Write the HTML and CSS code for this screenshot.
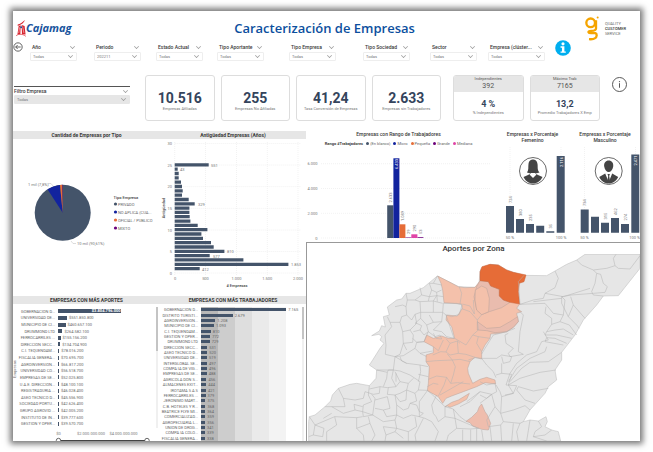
FILE: index.html
```html
<!DOCTYPE html>
<html lang="es">
<head>
<meta charset="utf-8">
<title>Caracterización de Empresas</title>
<link rel="stylesheet" href="styles.css">
</head>
<body>
<main class="dash">
  <header class="top">
    <div class="brand">
      <svg class="brand-mark" viewBox="0 0 30 52" aria-hidden="true">
        <path d="M5 14C12 12 20 7 27 0C25 8 17 14 5 18Z" fill="#d8232e"/>
        <path d="M8 18L14 16L13 44H4Z M17 15L26 18L29 44H18Z" fill="#d8232e"/>
        <path d="M11 22L8 40M20 20L24 40M1 49C10 42 20 42 30 49" fill="none" stroke="#fff" stroke-width="1.5"/>
        <path d="M0 48C10 41 20 43 30 50" fill="none" stroke="#d8232e" stroke-width="2"/>
        <circle cx="15.500" cy="22" r="3" fill="#17539c"/>
      </svg>
      <span class="brand-name">Cajamag</span>
    </div>
    <h1>Caracterización de Empresas</h1>
    <div class="partner">
      <svg class="partner-mark" viewBox="0 0 42 74" aria-hidden="true">
        <circle cx="17" cy="20" r="13" fill="none" stroke="#f5a400" stroke-width="7"/>
        <path d="M33 12V37C32 49 7 40 11 49C14 55 36 44 35 58C34 68 23 70 12 69" fill="none" stroke="#f5a400" stroke-width="7"/>
        <circle cx="38" cy="4" r="3" fill="#f5a400"/>
      </svg>
      <p>QUALITY<br><b>CUSTOMER</b><br>SERVICE</p>
    </div>
  </header>

  <section class="filters">
    <button class="icon-btn back" aria-label="Volver">
      <svg viewBox="0 0 30 30"><circle cx="15" cy="15" r="12.500" fill="none" stroke="#444" stroke-width="2.500"/><path d="M23 15H8M14 9L8 15L14 21" fill="none" stroke="#444" stroke-width="2.500"/></svg>
    </button>
    <div class="slicers">
      <div class="slicer"><label for="f1">Año</label><span class="pick"><select id="f1"><option>Todas</option></select></span></div>
      <div class="slicer"><label for="f2">Periodo</label><span class="pick"><select id="f2"><option>202211</option></select></span></div>
      <div class="slicer"><label for="f3">Estado Actual</label><span class="pick"><select id="f3"><option>Todas</option></select></span></div>
      <div class="slicer"><label for="f4">Tipo Aportante</label><span class="pick"><select id="f4"><option>Todas</option></select></span></div>
      <div class="slicer"><label for="f5">Tipo Empresa</label><span class="pick"><select id="f5"><option>Todas</option></select></span></div>
      <div class="slicer"><label for="f6">Tipo Sociedad</label><span class="pick"><select id="f6"><option>Todas</option></select></span></div>
      <div class="slicer"><label for="f7">Sector</label><span class="pick"><select id="f7"><option>Todas</option></select></span></div>
      <div class="slicer wide"><label for="f8">Empresa (clúster...</label><span class="pick"><select id="f8"><option>Todas</option></select></span></div>
    </div>
    <button class="icon-btn help" aria-label="Ayuda">
      <svg viewBox="0 0 46 46"><circle cx="23" cy="23" r="22.500" fill="#00aeef"/><circle cx="23" cy="11" r="4.500" fill="#fff"/><path d="M16 18H27V33H31V37H16V33H20V22H16Z" fill="#fff"/></svg>
    </button>
  </section>

  <section class="kpis">
    <div class="slicer company"><label for="f9">Filtro Empresa</label><span class="pick"><select id="f9"><option>Todas</option></select></span></div>
    <div class="cards four">
      <article class="card"><strong>10.516</strong><span>Empresas Afiliadas</span></article>
      <article class="card"><strong>255</strong><span>Empresas No Afiliadas</span></article>
      <article class="card"><strong>41,24</strong><span>Tasa Conversión de Empresas</span></article>
      <article class="card"><strong>2.633</strong><span>Empresas sin Trabajadores</span></article>
    </div>
    <div class="cards two">
      <article class="card split"><header><span>Independientes</span><em>392</em></header><strong>4 %</strong><span>% Independientes</span></article>
      <article class="card split"><header><span>Máximo Trab</span><em>7165</em></header><strong>13,2</strong><span>Promedio Trabajadores X Emp</span></article>
    </div>
    <button class="icon-btn info" aria-label="Información">
      <svg viewBox="0 0 46 46"><circle cx="23" cy="23" r="21.500" fill="none" stroke="#555" stroke-width="3"/><circle cx="23" cy="14" r="2" fill="#555"/><path d="M23 19V33" stroke="#555" stroke-width="3"/></svg>
    </button>
  </section>

  <div class="board">
    <div class="left">
      <section class="panel">
        <h2 class="bar-title">Cantidad de Empresas por Tipo</h2>
        <svg class="chart" viewBox="13 139 147 157">
          <circle cx="62.700" cy="212.800" r="28" fill="#44546a"/>
          <path d="M62.700 212.800L47.500 189.300A28 28 0 0 1 60 184.900Z" fill="#12239e"/>
          <path d="M62.700 212.800L60 184.900A28 28 0 0 1 62.200 184.800Z" fill="#e66c37"/>
          <path d="M62.700 212.800L62.200 184.800H62.700Z" fill="#6b007b"/>
          <path d="M48 183.500H51L53 186M71 241L73 243.500H76" fill="none" stroke="#bbb" stroke-width=".5"/>
          <g class="t4"><text x="28" y="185.500">1 mil (7,8%)</text><text x="77" y="245">10 mil (90,61%)</text></g>
          <text class="t4 strong" x="113.500" y="199">Tipo Empresa</text>
          <circle cx="115.500" cy="204" r="1.600" fill="#44546a"/><circle cx="115.500" cy="212" r="1.600" fill="#12239e"/><circle cx="115.500" cy="220" r="1.600" fill="#e66c37"/><circle cx="115.500" cy="228" r="1.600" fill="#6b007b"/>
          <g class="t4 mid"><text x="118" y="205.500">PRIVADO</text><text x="118" y="213.500">NO APLICA (CUA...</text><text x="118" y="221.500">OFICIAL / PUBLICO</text><text x="118" y="229.500">MIXTO</text></g>
        </svg>
      </section>

      <section class="panel">
        <h2 class="bar-title">Antigüedad Empresas (Años)</h2>
        <svg class="chart" viewBox="160 139 146 157">
          <path class="gridline" d="M174.700 143.500H301M174.700 165H301M174.700 186.700H301M174.700 208.300H301M174.700 230H301M174.700 251.500H301M174.700 273H301M174.700 142V275M205.500 142V275M236.500 142V275M267.300 142V275M298 142V275"/>
          <path fill="none" stroke="#44546a" stroke-width="3.300" d="M174.700 268.600h25M174.700 264.300h113.700M174.700 259.900h68.700M174.700 255.600h35M174.700 251.300h49.700M174.700 247h39M174.700 242.700h36.300M174.700 238.300h28.300M174.700 234h26.700M174.700 229.700h32.700M174.700 225.400h23M174.700 221.100h15.700M174.700 216.700h15M174.700 212.400h14.700M174.700 208.100h14.700M174.700 203.800h20M174.700 199.500h14M174.700 195.100h7.300M174.700 190.800h8M174.700 186.500h7.300M174.700 182.200h6.300M174.700 177.900h4M174.700 173.500h4M174.700 169.200h3M174.700 164.900h34"/>
          <g class="t4 end"><text x="172" y="145">30</text><text x="172" y="166.500">25</text><text x="172" y="188">20</text><text x="172" y="210">15</text><text x="172" y="231.500">10</text><text x="172" y="253">5</text><text x="172" y="274.500">0</text></g>
          <g class="t4 center"><text x="175" y="280">0</text><text x="205.500" y="280">500</text><text x="236.500" y="280">1.000</text><text x="267.300" y="280">1.500</text><text x="298" y="280">2.000</text></g>
          <g class="t4"><text x="211" y="166.500">551</text><text x="180" y="171">43</text><text x="198" y="205.500">329</text><text x="227" y="253">810</text><text x="213" y="257.500">577</text><text x="291" y="266">1.853</text><text x="202" y="270.500">412</text></g>
          <text class="t4 strong center" x="237" y="286.500">#  Empresas</text>
          <text class="t4 strong center" transform="translate(164.500 208) rotate(-90)">Antigüedad</text>
        </svg>
      </section>

      <section class="panel">
        <h2 class="bar-title">EMPRESAS CON MÁS APORTES</h2>
        <div class="scroller aportes">
          <svg class="side-label" viewBox="0 0 4 30"><text class="t4 center" transform="translate(3 15) rotate(-90)">Empresas</text></svg>
          <ol class="rows">
            <li><span>GOBERNACION D...</span><i class="inside" style="width:45%">$3.804.796.000</i></li>
            <li><span>UNIVERSIDAD DE...</span><i style="width:6.5%"></i><b>$551.850.800</b></li>
            <li><span>MUNICIPIO DE CI...</span><i style="width:5.4%"></i><b>$460.657.100</b></li>
            <li><span>DRUMMOND LTD</span><i style="width:3.2%"></i><b>$264.582.100</b></li>
            <li><span>FERROCARRILES ...</span><i style="width:1.8%"></i><b>$155.156.200</b></li>
            <li><span>DIRECCION SECC...</span><i style="width:1.6%"></i><b>$134.704.900</b></li>
            <li><span>C.I. TEQUENDAM...</span><i style="width:.9%"></i><b>$78.016.200</b></li>
            <li><span>FISCALIA GENERA...</span><i style="width:.8%"></i><b>$70.695.700</b></li>
            <li><span>AGROINVERSION...</span><i style="width:.8%"></i><b>$66.817.200</b></li>
            <li><span>UNIVERSIDAD CO...</span><i style="width:.7%"></i><b>$56.518.700</b></li>
            <li><span>EMPRESAS DE SE...</span><i style="width:.7%"></i><b>$52.025.800</b></li>
            <li><span>U.A.E. DIRECCION...</span><i style="width:.7%"></i><b>$48.100.100</b></li>
            <li><span>REGISTRADURIA ...</span><i style="width:.7%"></i><b>$46.028.400</b></li>
            <li><span>ASEO TECNICO D...</span><i style="width:.7%"></i><b>$45.556.900</b></li>
            <li><span>SOCIEDAD PORTU...</span><i style="width:.7%"></i><b>$42.626.400</b></li>
            <li><span>GRUPO AGROVID ...</span><i style="width:.7%"></i><b>$42.005.200</b></li>
            <li><span>INSTITUTO DE IN...</span><i style="width:.7%"></i><b>$39.777.600</b></li>
            <li><span>GESTION Y OPER...</span><i style="width:.7%"></i><b>$39.570.700</b></li>
          </ol>
          <div class="track"><div class="thumb"></div></div>
        </div>
        <svg class="chart" viewBox="13 428 147 13">
          <g class="t4 center"><text x="58.500" y="434.500">$0</text><text x="91" y="434.500">$2.000.000.000</text><text x="123.500" y="434.500">$4.000.000.000</text></g>
          <path d="M58.500 440.500H147" stroke="#444"/><g fill="#fff" stroke="#444" stroke-width=".800"><circle cx="58.500" cy="440.500" r="2.200"/><circle cx="147" cy="440.500" r="2.200"/></g>
        </svg>
      </section>

      <section class="panel">
        <h2 class="bar-title">EMPRESAS CON MÁS TRABAJADORES</h2>
        <div class="scroller workers">
          <ol class="rows">
            <li><span>GOBERNACION D...</span><i style="width:60%"></i><b>7.165</b></li>
            <li><span>DISTRITO TURISTI...</span><i style="width:22.4%"></i><b>2.679</b></li>
            <li><span>AGROINVERSION...</span><i style="width:10.1%"></i><b>1.208</b></li>
            <li><span>MUNICIPIO DE CI...</span><i style="width:9.2%"></i><b>1.093</b></li>
            <li><span>C.I. TEQUENDAM...</span><i style="width:6.8%"></i><b>810</b></li>
            <li><span>GESTION Y OPER...</span><i style="width:6.5%"></i><b>772</b></li>
            <li><span>DRUMMOND LTD</span><i style="width:6.1%"></i><b>729</b></li>
            <li><span>DIRECCION SECC...</span><i style="width:4.4%"></i><b>531</b></li>
            <li><span>ASEO TECNICO D...</span><i style="width:4.4%"></i><b>520</b></li>
            <li><span>UNIVERSIDAD DE...</span><i style="width:4.3%"></i><b>519</b></li>
            <li><span>INTERGLOBAL SE...</span><i style="width:4.2%"></i><b>497</b></li>
            <li><span>COMPA IA DE VIG...</span><i style="width:4.2%"></i><b>496</b></li>
            <li><span>EMPRESAS DE SE...</span><i style="width:4.1%"></i><b>488</b></li>
            <li><span>AGRICOLA DON S...</span><i style="width:3.8%"></i><b>456</b></li>
            <li><span>ALMACENES EXIT...</span><i style="width:3.7%"></i><b>444</b></li>
            <li><span>IROTAMA S A S</span><i style="width:3.5%"></i><b>421</b></li>
            <li><span>FERROCARRILES ...</span><i style="width:3.2%"></i><b>379</b></li>
            <li><span>JERONIMO MART...</span><i style="width:3.1%"></i><b>375</b></li>
            <li><span>C.B. HOTELES Y R...</span><i style="width:3.1%"></i><b>368</b></li>
            <li><span>BEATRICE FLYE MI...</span><i style="width:3%"></i><b>364</b></li>
            <li><span>COMERCIALIZAD...</span><i style="width:3%"></i><b>359</b></li>
            <li><span>AGROPECUARIA L...</span><i style="width:3%"></i><b>356</b></li>
            <li><span>UNION DE DROG...</span><i style="width:2.9%"></i><b>341</b></li>
            <li><span>COMPA IA COLO...</span><i style="width:2.8%"></i><b>339</b></li>
            <li><span>FISCALIA GENERA...</span><i style="width:2.8%"></i><b>338</b></li>
          </ol>
          <div class="track"><div class="thumb"></div></div>
        </div>
      </section>
    </div>

    <div class="right">
      <div class="trio">
        <section class="panel">
          <h2>Empresas con Rango de Trabajadores</h2>
          <ul class="legend">
            <li class="head">Rango #Trabajadores</li><li class="c1">(En blanco)</li><li class="c2">Micro</li><li class="c3">Pequeña</li><li class="c4">Grande</li><li class="c5">Mediana</li>
          </ul>
          <svg class="chart" viewBox="306 149 185 93">
            <path class="gridline" d="M321 163.700H491M321 188.500H491M321 213.300H491M321 238H491"/>
            <g class="t4 end"><text x="317.500" y="165">6.000</text><text x="317.500" y="190">4.000</text><text x="317.500" y="214.500">2.000</text><text x="317.500" y="239.500">0</text></g>
            <path fill="#44546a" d="M387.200 205.300h6.200v32.700h-6.200z"/><path fill="#12239e" d="M393.400 158.300h6v79.700h-6z"/><path fill="#e66c37" d="M399.400 224.300h6v13.700h-6z"/><path fill="#6b007b" d="M405.400 237.400h6v.6h-6zM417.400 237.200h6v.8h-6z"/><path fill="#e044a7" d="M411.300 234.300h6.100v3.700h-6.100z"/>
            <g class="t4"><text transform="translate(391.700 202.500) rotate(-90)">2.633</text><text class="light" transform="translate(398 169) rotate(-90)">6.433</text><text transform="translate(404 221) rotate(-90)">1.089</text><text transform="translate(409.700 234) rotate(-90)">29</text><text transform="translate(415.500 231.500) rotate(-90)">290</text><text transform="translate(422 234) rotate(-90)">53</text></g>
          </svg>
        </section>
        <section class="panel">
          <h2>Empresas x Porcentaje Femenino</h2>
          <svg class="chart" viewBox="495 145 75 97">
            <path class="gridline" d="M510 147V233M561 147V233"/>
            <path fill="#44546a" d="M506 206h8v26.700h-8zM516 219h8v13.700h-8zM526 224h8v8.700h-8zM536.200 225.700h8v7h-8zM546.300 231.300h8v1.400h-8zM556.700 156h8v76.700h-8z"/>
            <g transform="translate(533 171)"><circle r="13.500" fill="#fff" stroke="#444" stroke-width=".800"/><path fill="#444" d="M-6 1.500C-4-1-5-4-4.500-7C-4-10.500-2-11.500 0-11.500S4-10.500 4.500-7C5-4 4 -1 6.500 1.500L2.500 2.500L5 4L9.500 6C7 11 3 12.500 0 12.500S-7 11-9.500 6L-5 4L-2.500 2.500Z"/><path d="M-3.500 3.500L0 7L3.500 3.500L2 2H-2Z" fill="#fff"/></g>
            <g class="t4"><text transform="translate(511.500 203) rotate(-90)">724</text><text transform="translate(521.500 216) rotate(-90)">380</text><text transform="translate(531.500 221) rotate(-90)">235</text><text transform="translate(552 228.500) rotate(-90)">35</text><text class="light" transform="translate(562.500 167) rotate(-90)">2.116</text></g>
            <g class="t4 center"><text x="510" y="238.500">50 %</text><text x="561" y="238.500">100 %</text></g>
          </svg>
        </section>
        <section class="panel">
          <h2>Empresas x Porcentaje Masculino</h2>
          <svg class="chart" viewBox="570 145 70 97">
            <path class="gridline" d="M584.500 147V233M635.500 147V233"/>
            <path fill="#44546a" d="M580.700 209.500h8v23.200h-8zM591 216.700h8v16h-8zM601 222.700h8v10h-8zM611 218h8v14.700h-8zM621 224h8v8.700h-8zM631.300 154.500h8v78.200h-8z"/>
            <g transform="translate(608.700 171)"><circle r="13.500" fill="#fff" stroke="#444" stroke-width=".800"/><path fill="#444" d="M0-10.500C3-10.500 5-8 4.500-4.500C4 -1 2 1 0 1S-4-1-4.500-4.500C-5-8-3-10.500 0-10.500ZM-3.500 2.500L0 11L3.500 2.500L9.500 6C7 11 3 12.500 0 12.500S-7 11-9.500 6Z"/><path fill="#444" d="M-1.200 3H1.200L.5 5L1.300 10L0 12L-1.300 10L-.5 5Z"/></g>
            <g class="t4"><text transform="translate(586.200 206) rotate(-90)">734</text><text transform="translate(606.500 219.500) rotate(-90)">315</text><text transform="translate(616.500 215) rotate(-90)">462</text><text transform="translate(626.500 220.500) rotate(-90)">274</text><text class="light" transform="translate(637 165.500) rotate(-90)">2.471</text></g>
            <g class="t4 center"><text x="584.500" y="238.500">50 %</text><text x="634.500" y="238.500">100 %</text></g>
          </svg>
        </section>
      </div>

      <section class="map">
        <h2>Aportes por Zona</h2>
        <svg class="chart" viewBox="21 57 999 561">
          <path class="land" d="M26 618V560L28 545L45 540L75 515L92 498L97 480L115 460L150 448L170 445L208 452L228 430L230 405L208 390L218 375L240 340L252 325L240 315L245 305L237 298L215 302L238 288L245 272L256 276L250 245L268 240L262 216L290 195L305 192L318 175L330 175L370 158L412 123L450 142L475 155L525 157L537 145L540 110L545 98L570 88L595 90L620 105L640 112L672 121L740 122L765 108L800 88L830 75L855 58H1020V100L955 182L910 183L890 210L850 255L825 300L785 352V375L765 405L770 435L745 455L735 475L690 525L670 560L690 555L715 558L738 545L742 560L735 575L755 585L775 590L782 618Z"/>
          <g transform="translate(210 15)">
            <path fill="#f4c1ab" stroke="#b9a39b" d="M203 108L240 127L265 140L285 143L315 142L330 122L449 192L440 205L455 215L440 220L445 245L430 262L410 275L385 280L362 282L360 295L345 315L335 335V357L315 352L300 365L293 385L295 400L308 430L330 418L350 412L375 420L377 432L345 428L320 440L280 455L245 468L228 475L218 490L205 470L172 452L175 430L178 380L168 365V345L190 338V320L162 305L170 285L190 295L215 288L235 295L254 295L245 260L228 240L230 225L262 228L277 205L275 192L222 188L218 150L213 130Z"/>
            <path fill="#e9bcae" stroke="#b9a39b" d="M330 122L355 125L362 138L388 148V168L400 180L420 187L395 203L358 215L335 224L320 210L312 170L320 140ZM322 245L350 265L390 262L420 245L443 230L445 245L430 262L410 275L375 278L350 272L322 270Z"/>
            <path fill="#f4c1ab" stroke="#b9a39b" d="M316 150L335 138L350 145L358 175L356 215L335 224L320 210L315 180ZM225 500L245 487L265 480L298 460L290 478L265 492L240 502L232 498Z"/>
            <path fill="#e66c37" stroke="#c8653c" d="M330 95L336 80L360 73L385 75L410 90L430 97L468 105L462 125L448 130L445 155L449 192L420 187L400 180L388 168V148L362 138L355 125L330 122Z"/>
            <path fill="#efbdad" stroke="#b9a39b" d="M335 492L345 515L352 525L362 550L355 570L335 568L308 558L300 548L288 544L305 532L322 515L328 500Z"/>
            <path class="edge" d="M268 141L275 160L270 192M277 192L300 198L313 222L310 180M275 206L300 215L322 240L325 270L308 285L288 315L254 295M322 240L335 224M308 285L325 290L360 295M325 290L320 310L335 335M228 296L240 310L262 303L270 310M262 303L265 340L288 343L315 352M265 340L240 345L228 336L212 335L188 345M240 310L228 336M190 320L205 332L220 300M232 342L247 360L270 358L300 365M168 365L200 362L247 360L256 380L250 405L242 430L262 428L300 432M175 418L200 408L230 412L242 430M230 412L222 435L205 468M172 440L190 430L205 433"/>
          </g>
          <g class="edge">
            <path d="M318 175L322 195L318 215L320 240L305 245L300 262L270 262L262 245M270 262L275 275L255 300L258 330L256 358L285 365L280 405L230 405M285 215L308 210L318 215M322 195L345 195L360 200L362 232L345 238L335 255L320 240M360 200L400 198L400 232L362 232M345 238L350 265L330 285L308 290L300 262M330 285L340 300L338 322L310 325L308 290M360 158L365 180L388 185L385 198M388 145L395 165L388 185L410 182L400 198L428 205M365 180L345 195M395 165L410 172L425 165M410 182L430 185M412 123L400 145L388 145M400 145L425 150M410 172L412 200M400 232L428 232L430 205L470 205L486 210L478 238L455 245L438 240L428 232L425 260L400 262L388 240M438 240L450 275L462 310L440 305L425 290L400 285L425 260M400 262L380 270L362 250L345 265L350 265M362 250L362 232M380 270L385 290L372 320L350 322L338 310M340 290L360 285L372 300L385 290M350 265L365 272L360 285M385 290L405 305L420 300L425 312L408 310L400 295M372 320L350 322L345 340L360 355L398 348M310 325L300 358L285 365L310 362L345 340M285 365L320 385L360 390L385 395M360 355L380 365M300 365L305 378L320 385M280 405L300 408L330 420L360 440L355 465L383 466M355 418L385 425M360 390L362 410L355 440M320 345L310 325"/>
            <path d="M230 405L262 412L265 405L280 405L275 430L288 455L262 458L240 455L208 462M262 412L260 430L250 455M288 455L300 440L325 445L340 430M288 415L288 440M300 440L285 410M325 445L320 465L345 475L350 498L330 505L325 520L310 525L290 510L285 480L262 478L265 458M285 480L300 475L320 465M345 475L355 465M330 505L350 510L358 530M285 480L300 500L318 495L320 465M240 455L238 475L220 478L195 470L190 490L165 495L130 490L115 460M208 452L205 480L215 500L190 510L188 530L165 525L162 508L188 515M165 525L130 535L95 515L75 515M130 490L135 515L95 515M215 478L225 490L218 540L188 530M225 495L262 485M225 520L250 525L270 520L262 485M250 525L260 545L290 540L290 510M188 530L190 545L218 540L250 560L285 555L290 540L310 550L335 540L358 545L370 535L358 530M104 545L170 548L188 545M104 545L110 570L80 590V618M28 545L45 570L40 600L26 605M45 570L104 545M70 550L95 535M170 548L170 580L190 600L192 618M170 580L210 565L205 545M210 565L225 600L215 618M285 555L290 580L325 590L325 618M290 580L250 575L258 600L255 618M258 600L285 590L310 610M325 590L350 575L345 545M285 590L290 580M45 570L72 580L68 605L40 600"/>
            <path d="M383 466L358 500L358 545L375 550L395 560L415 590L405 618M383 466L435 515L435 545L415 560L408 545L400 535L395 510L410 480M435 515L460 522L465 550L435 545M465 550L500 565L535 580M465 550L470 580L445 600L440 618M470 580L510 582L537 580M488 584V618M512 584V618M530 580V618M370 550L345 600L348 618M460 522L480 545L500 560M480 515L510 500L530 480L540 470M540 440L560 450L585 445L590 470L575 478L540 505M500 500L540 470L575 478M420 480L490 440M505 375L525 368L545 370L560 390L580 410L588 428M545 357L555 340L580 300L620 290L645 280"/>
            <path d="M672 121L655 140L660 208L700 195L730 190L735 175L765 158L775 130L765 108M660 208L735 205L760 235L790 240L795 195L785 185L815 180L880 175M700 200L785 190M738 215L735 235L755 250L755 268L740 290L735 300M830 75L845 90L880 105L890 115L885 145L875 170L880 180L910 183M880 105L920 100L945 92L955 100L990 102L1020 62M945 92L940 70L948 58M890 115L902 118L910 145L922 155L915 172L880 175M735 175L790 185L870 160M785 185L785 205L805 245L820 210L812 185M805 245L830 270L838 280M820 210L855 250M790 240L780 260L808 270L830 300M755 268L780 260M740 290L765 285L790 282L820 300M735 300L770 300L815 310M740 308L765 310L800 325M740 308L735 320L790 330M730 290L745 315L725 320L710 350L680 360L650 385L630 415L618 450M740 335L735 350L690 370L650 400L625 440M785 352L745 380L690 382L665 400L630 440M768 405L720 412L660 430L625 450M745 460L700 468L655 455L650 465L675 495L705 505M618 450L650 452L640 475L615 480M655 225L670 240L660 290L655 350L670 358L630 365L625 355L640 340L618 325L615 300L625 295M545 370L590 370L605 360L635 365L630 380L610 385L605 365M605 385L605 415L588 420M605 415L635 418L625 450L640 475L605 485L600 470L588 450M605 485L602 535L640 525L675 512L690 525M602 535L610 560L660 565L670 560M575 478L585 515L602 535M585 515L560 555L565 575L602 570L610 560M602 570L605 618M660 565L650 590L655 618M570 575L575 618M545 585L550 618M690 555L680 618M715 558L725 575L705 590L700 605L740 618M755 585L735 600L700 605M640 565L635 618M540 480L560 490L575 478"/>
          </g>
        </svg>
      </section>
    </div>
  </div>
</main>
</body>
</html>
```
FILE: styles.css
```css
* { box-sizing: border-box; }

body {
  margin: 0;
  padding: 11px 13px;
  background: #fff;
  color: #3a3a3a;
  font-family: Roboto, "Liberation Sans", sans-serif;
  font-size: 5px;
  line-height: 6px;
}

h1, h2, p, ol, ul { margin: 0; padding: 0; }
ol, ul { list-style: none; }
svg { display: block; }

.dash {
  background: #fff;
  box-shadow: 0 0 6px 3px #777;
}

/* Header */
.top {
  display: grid;
  grid-template-columns: 31fr auto 30fr;
  align-items: center;
  height: 30px;
  padding: 4px 14px 0 3px;
}
.brand { display: flex; align-items: center; }
.brand-mark { width: 10px; height: 17px; }
.brand-name {
  color: #17539c;
  font: italic 700 11px/14px "Open Sans", sans-serif;
}
h1 {
  color: #0c4f9e;
  font: 600 13px/18px "Open Sans", sans-serif;
}
.partner {
  display: flex;
  justify-content: flex-end;
  align-items: center;
  gap: 6px;
}
.partner-mark { width: 14px; height: 25px; }
.partner p { color: #666; font-size: 4px; line-height: 5px; }
.partner b { color: #333; font-weight: 500; }

/* Slicers */
.filters {
  display: flex;
  gap: 7px;
  padding: 2px 69px 0 0;
}
.icon-btn {
  flex: none;
  padding: 0;
  border: 0;
  background: none;
}
.back { width: 10px; height: 10px; margin-top: -1px; }
.help { width: 16px; height: 16px; margin-top: -3px; }
.slicers {
  flex: 1;
  display: grid;
  grid-template-columns: 64fr 62fr 61fr 72fr 74fr 67fr 58fr 60fr;
}
.slicer { width: 47px; }
.slicer.wide { width: 57px; }
.slicer label {
  display: flex;
  justify-content: space-between;
  height: 9px;
  padding: 1px 2px 0;
  font-weight: 500;
  white-space: nowrap;
}
.slicer label::after,
.pick::after {
  content: "";
  width: 4px;
  height: 4px;
  border: solid #999;
  border-width: 0 1px 1px 0;
  transform: rotate(45deg) scale(.7);
}
.pick { display: grid; align-items: center; }
.pick select, .pick::after { grid-area: 1 / 1; }
.pick::after { justify-self: end; margin: 0 4px 2px 0; }
.pick select {
  width: 100%;
  height: 9px;
  padding: 0 2px;
  border: 1px solid #eee;
  border-radius: 1px;
  background: #fff;
  color: #777;
  font: 4px/6px Roboto, sans-serif;
  appearance: none;
}

/* KPI cards */
.kpis {
  display: flex;
  align-items: flex-start;
  height: 70px;
  padding: 14px 13px 0 1px;
}
.slicer.company { flex: 116; margin: 11px 15px 0 0; }
.company label { border-top: 1px solid #555; padding-left: 0; }
.company .pick select { background: #e6e6e6; border-color: #e6e6e6; }
.cards { display: grid; gap: 6px; height: 46px; }
.four { flex: 296; grid-template-columns: repeat(4, 1fr); margin-right: 12px; }
.two { flex: 147; grid-template-columns: repeat(2, 1fr); margin-right: 12px; }
.card {
  display: flex;
  flex-direction: column;
  align-items: center;
  padding-top: 14px;
  overflow: hidden;
  border: 1px solid #ddd;
  border-radius: 3px;
  color: #777;
  font-size: 4px;
}
.card > strong { color: #34445c; font-size: 14px; line-height: 16px; }
.card.split { padding: 0; }
.split header {
  display: flex;
  flex-direction: column;
  align-items: center;
  width: 100%;
  height: 16px;
  background: #e6e6e6;
  color: #555;
}
.split em { font: 7px/9px Roboto, sans-serif; }
.split > strong { margin-top: 6px; font-size: 9px; line-height: 12px; }
.info { width: 15px; height: 15px; margin-top: 2px; }

/* Report body */
.board { display: grid; grid-template-columns: 293fr 334fr; }
.left {
  display: grid;
  grid-template-columns: 147fr 146fr;
  align-content: start;
}
.panel { min-width: 0; }
.panel h2 {
  font-size: 5px;
  font-weight: 500;
  line-height: 6px;
  text-align: center;
}
.panel .bar-title {
  height: 8px;
  background: #e6e6e6;
  font-weight: 700;
  line-height: 8px;
}
.chart { width: 100%; height: auto; }

.t4 { font-size: 4px; fill: #777; }
.mid { fill: #666; }
.strong { font-weight: 500; fill: #444; }
.light { fill: #fff; }
.end { text-anchor: end; }
.center { text-anchor: middle; }
.gridline { fill: none; stroke: #e4e4e4; stroke-width: .5; stroke-dasharray: 1 1; }

/* Ranked lists */
.scroller { display: flex; padding-top: 3px; }
.side-label { width: 4px; height: 30px; margin-top: 47px; overflow: visible; }
.rows { flex: 1; display: grid; }
.rows li { display: flex; align-items: center; min-height: 0; }
.rows span {
  flex: none;
  width: 41px;
  padding-right: 3px;
  color: #666;
  font-size: 4px;
  line-height: 5px;
  text-align: right;
  white-space: nowrap;
}
.rows i { flex: none; height: 4px; background: #44546a; }
.rows b {
  padding-left: 2px;
  color: #666;
  font-size: 4px;
  font-weight: 400;
  line-height: 5px;
}
.rows .inside {
  color: #fff;
  font: 700 4px/4px Roboto, sans-serif;
  text-align: right;
}
.aportes { height: 124px; }
.aportes .rows { height: 120px; padding-top: 1px; }
.workers { height: 137px; }
.workers .rows {
  height: 134px;
  background: linear-gradient(90deg, #b8b8b8 20%, #cdcdcd 20% 40%, #dedede 40% 60%, #eaeaea 60% 80%, #f3f3f3 80%) 41px 0 / 85px 100% no-repeat;
}
.track { width: 2px; margin-right: 2px; background: #f0f0f0; }
.thumb { height: 44px; background: #c4c4c4; }
.workers .rows i { height: 3px; }
.workers .thumb { height: 32px; }

/* Distribution charts */
.right { display: flex; flex-direction: column; }
.trio { display: grid; grid-template-columns: 189fr 75fr 70fr; }
.trio .panel:not(:first-child) h2 { height: 14px; padding: 0 8px; }
.trio .panel:first-child { padding-right: 4px; }
.legend {
  display: flex;
  justify-content: center;
  gap: 3px;
  height: 12px;
  padding-top: 4px;
  color: #666;
  font-size: 4px;
  white-space: nowrap;
}
.legend .head { color: #444; font-weight: 700; }
.legend li:not(.head)::before {
  content: "";
  display: inline-block;
  width: 3px;
  height: 3px;
  margin-right: 1px;
  border-radius: 50%;
}
.legend .c1::before { background: #44546a; }
.legend .c2::before { background: #12239e; }
.legend .c3::before { background: #e66c37; }
.legend .c4::before { background: #6b007b; }
.legend .c5::before { background: #e044a7; }

/* Map */
.map { border: solid #999; border-width: 1px 0 0 1px; }
.map h2 {
  color: #333;
  font-size: 8px;
  font-weight: 500;
  line-height: 11px;
  text-align: center;
}
.map path { stroke-width: 1.5; stroke-linejoin: round; }
.land { fill: #e6e6e6; stroke: #b8b8b8; }
.edge { fill: none; stroke: #b3b3b3; }
```
